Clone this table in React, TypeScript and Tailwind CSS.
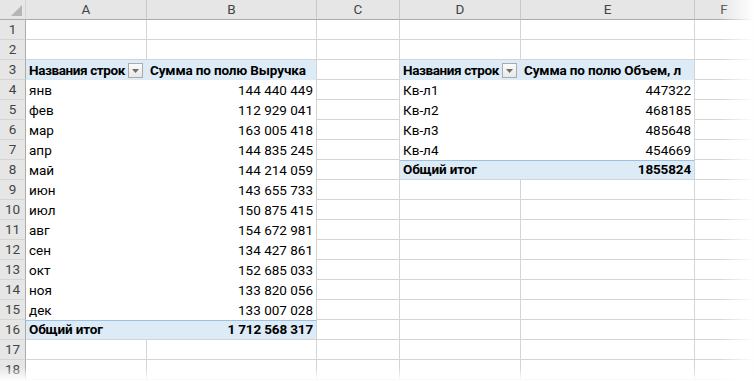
import React from "react";

const COLS = ["A", "B", "C", "D", "E", "F"];

const revenue: [string, string][] = [
  ["янв", "144 440 449"],
  ["фев", "112 929 041"],
  ["мар", "163 005 418"],
  ["апр", "144 835 245"],
  ["май", "144 214 059"],
  ["июн", "143 655 733"],
  ["июл", "150 875 415"],
  ["авг", "154 672 981"],
  ["сен", "134 427 861"],
  ["окт", "152 685 033"],
  ["ноя", "133 820 056"],
  ["дек", "133 007 028"],
];

const volume: [string, string][] = [
  ["Кв-л1", "447322"],
  ["Кв-л2", "468185"],
  ["Кв-л3", "485648"],
  ["Кв-л4", "454669"],
];

type CellData = {
  text?: string;
  kind?: "plain" | "head" | "body" | "total";
  right?: boolean;
  inner?: boolean; // first column of a pivot: no right gridline
  filter?: boolean;
};

function FilterButton() {
  return (
    <div className="ml-auto mr-[1px] mb-[1px] flex size-[15px] shrink-0 items-center justify-center border border-[#ababab] bg-gradient-to-b from-[#fbfbfb] to-[#e8e8e8]">
      <svg width="7" height="4" viewBox="0 0 7 4">
        <path d="M0 0h7L3.5 4z" fill="#6d6d6d" />
      </svg>
    </div>
  );
}

function Cell({ c }: { c: CellData }) {
  const kind = c.kind ?? "plain";
  const border =
    kind === "plain"
      ? "border-r border-b border-[#d4d4d4]"
      : kind === "total"
        ? "border-t border-t-[#9bc2e6] border-b border-b-[#d4d4d4] " + (c.inner ? "" : "border-r border-r-[#d4d4d4]")
        : c.inner
          ? ""
          : "border-r border-[#d4d4d4]";
  const bg = kind === "head" || kind === "total" ? "bg-[#ddebf7]" : "bg-white";
  const weight =
    kind === "head" || kind === "total"
      ? c.filter
        ? "font-bold tracking-[-0.4px]"
        : "font-bold tracking-[-0.15px]"
      : "font-normal";
  return (
    <div
      className={`flex h-5 items-end overflow-visible whitespace-nowrap px-[3px] pb-[1px] text-[13.5px] leading-[17px] text-black ${border} ${bg} ${weight} ${c.right ? "justify-end" : "justify-start"}`}
    >
      {c.text}
      {c.filter && <FilterButton />}
    </div>
  );
}

function buildRow(r: number): CellData[] {
  const row: CellData[] = COLS.map(() => ({}));
  // pivot 1: A-B rows 3..16
  if (r === 3) {
    row[0] = { text: "Названия строк", kind: "head", inner: true, filter: true };
    row[1] = { text: "Сумма по полю Выручка", kind: "head" };
  } else if (r >= 4 && r <= 15) {
    const [m, v] = revenue[r - 4];
    row[0] = { text: m, kind: "body", inner: true };
    row[1] = { text: v, kind: "body", right: true };
  } else if (r === 16) {
    row[0] = { text: "Общий итог", kind: "total", inner: true };
    row[1] = { text: "1 712 568 317", kind: "total", right: true };
  }
  // pivot 2: D-E rows 3..8
  if (r === 3) {
    row[3] = { text: "Названия строк", kind: "head", inner: true, filter: true };
    row[4] = { text: "Сумма по полю Объем, л", kind: "head" };
  } else if (r >= 4 && r <= 7) {
    const [q, v] = volume[r - 4];
    row[3] = { text: q, kind: "body", inner: true };
    row[4] = { text: v, kind: "body", right: true };
  } else if (r === 8) {
    row[3] = { text: "Общий итог", kind: "total", inner: true };
    row[4] = { text: "1855824", kind: "total", right: true };
  }
  return row;
}

export default function App() {
  const rows = Array.from({ length: 18 }, (_, i) => i + 1);
  return (
    <div
      className="relative h-[381px] w-[754px] overflow-hidden bg-white"
      style={{ fontFamily: "Roboto, 'Liberation Sans', sans-serif" }}
    >
      <div className="grid grid-cols-[26px_121px_170px_83px_121px_174px_59px]">
        {/* column headers */}
        <div className="relative h-5 border-r border-b border-r-[#d4d4d4] border-b-[#ababab] bg-[#e6e6e6]">
          <svg className="absolute bottom-[3px] right-[3px]" width="11" height="11" viewBox="0 0 11 11">
            <path d="M11 0v11H0z" fill="#b5b5b5" />
          </svg>
        </div>
        {COLS.map((c) => (
          <div
            key={c}
            className="flex h-5 items-center justify-center border-r border-b border-r-[#c8c8c8] border-b-[#ababab] bg-[#e6e6e6] text-[13.5px] text-[#444]"
          >
            {c}
          </div>
        ))}
        {rows.map((r) => (
          <React.Fragment key={r}>
            <div className="flex h-5 items-center justify-center border-r border-b border-r-[#ababab] border-b-[#d4d4d4] bg-[#e6e6e6] text-[13.5px] text-[#444]">
              {r}
            </div>
            {buildRow(r).map((c, i) => (
              <Cell key={i} c={c} />
            ))}
          </React.Fragment>
        ))}
        <div className="h-[2px] border-r border-r-[#ababab] bg-[#e6e6e6]" />
        {COLS.map((c) => (
          <div key={c} className="h-[2px] border-r border-[#d4d4d4]" />
        ))}
      </div>
      {/* soft fade at the right and bottom edges */}
      <div className="pointer-events-none absolute inset-y-0 right-0 w-[36px] bg-gradient-to-r from-transparent to-white" />
      <div className="pointer-events-none absolute inset-x-0 bottom-0 h-[14px] bg-gradient-to-b from-transparent to-white" />
    </div>
  );
}
